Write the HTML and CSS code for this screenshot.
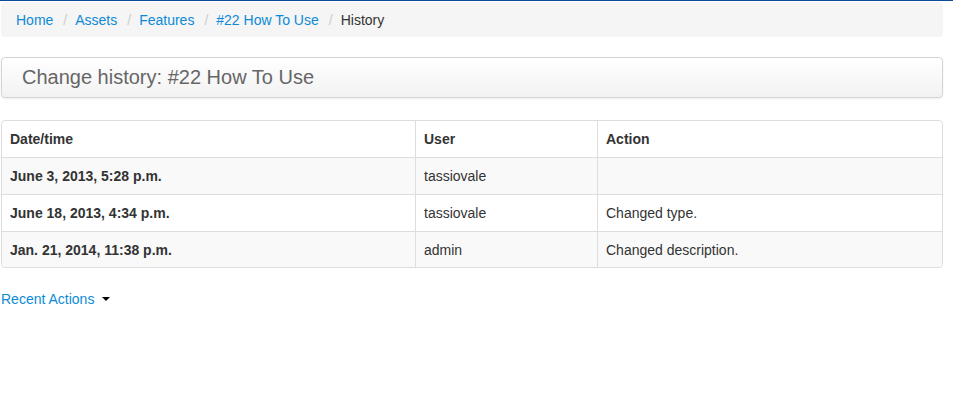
FILE: index.html
```html
<!DOCTYPE html>
<html>
<head>
<meta charset="utf-8">
<link rel="stylesheet" href="styles.css">
</head>
<body>
<div class="topbar"></div>
<div class="page">
  <ul class="breadcrumb">
    <li><a href="#">Home</a></li>
    <li><a href="#">Assets</a></li>
    <li><a href="#">Features</a></li>
    <li><a href="#">#22 How To Use</a></li>
    <li class="active">History</li>
  </ul>
  <div class="page-header"><h1>Change history: #22 How To Use</h1></div>
  <table class="history">
    <thead>
      <tr><th class="c1">Date/time</th><th class="c2">User</th><th>Action</th></tr>
    </thead>
    <tbody>
      <tr><th>June 3, 2013, 5:28 p.m.</th><td>tassiovale</td><td></td></tr>
      <tr><th>June 18, 2013, 4:34 p.m.</th><td>tassiovale</td><td>Changed type.</td></tr>
      <tr><th>Jan. 21, 2014, 11:38 p.m.</th><td>admin</td><td>Changed description.</td></tr>
    </tbody>
  </table>
  <a class="recent" href="#">Recent Actions <span class="caret"></span></a>
</div>
</body>
</html>
```
FILE: styles.css
```css
html, body { margin: 0; padding: 0; background: #fff; }
body { font-family: "Liberation Sans", Arial, sans-serif; font-size: 14px; line-height: 20px; color: #333; }
a { color: #0d8ad6; text-decoration: none; }
.topbar { height: 1px; background: #0b4c98; }
.page { width: 942px; margin-left: 1px; }
.breadcrumb { list-style: none; margin: 1px 0 20px 0; padding: 8px 15px 7px; background: #f5f5f5; border-radius: 4px; display: flex; }
.breadcrumb li + li::before { content: "/"; color: #ccc; padding: 0 8px 0 7px; }
.breadcrumb li + li { padding-left: 3px; }
.breadcrumb .active { color: #333; }
.page-header { border: 1px solid #d4d4d4; border-radius: 4px; background: linear-gradient(#ffffff, #f2f2f2); box-shadow: 0 1px 2px rgba(0,0,0,0.08); padding: 9px 20px 10px; margin-bottom: 22px; }
.page-header h1 { margin: 0; font-size: 20px; line-height: 20px; font-weight: normal; color: #666; }
.history { width: 100%; border-collapse: separate; border-spacing: 0; border: 1px solid #ddd; border-radius: 4px; }
.history th, .history td { text-align: left; padding: 8px; line-height: 20px; border-top: 1px solid #ddd; border-left: 1px solid #ddd; vertical-align: top; }
.history thead th { border-top: 0; }
.history tbody tr:last-child > * { padding-bottom: 7px; }
.history tr > :first-child { border-left: 0; }
.history th { font-weight: bold; }
.history tbody tr:nth-child(odd) { background: #f9f9f9; }
.history tbody tr:last-child th { border-bottom-left-radius: 4px; }
.history tbody tr:last-child td:last-child { border-bottom-right-radius: 4px; }
.history .c1 { width: 397px; }
.history .c2 { width: 165px; }
.recent { display: inline-block; margin-top: 21px; }
.caret { display: inline-block; width: 0; height: 0; border-left: 4px solid transparent; border-right: 4px solid transparent; border-top: 4px solid #000; vertical-align: middle; margin-left: 4px; margin-top: -2px; }
```
